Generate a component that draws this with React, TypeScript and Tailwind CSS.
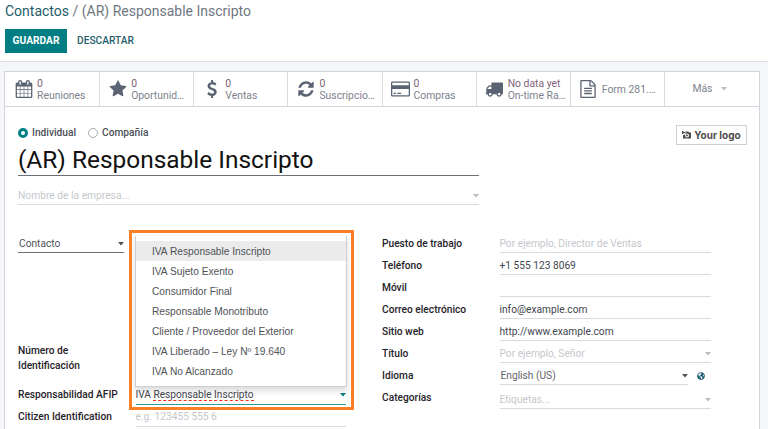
import React from "react";
import { FaGlobeAmericas } from "react-icons/fa";

const icons = {
  calendar:
    "M192 1664h288v-288h-288v288zm352 0h320v-288h-320v288zm-352-352h288v-320h-288v320zm352 0h320v-320h-320v320zm-352-384h288v-288h-288v288zm736 736h320v-288h-320v288zm-384-736h320v-288h-320v288zm768 736h288v-288h-288v288zm-384-352h320v-320h-320v320zm-352-864v-288q0-13-9.5-22.5t-22.5-9.5h-64q-13 0-22.5 9.5t-9.5 22.5v288q0 13 9.5 22.5t22.5 9.5h64q13 0 22.5-9.5t9.5-22.5zm736 864h288v-320h-288v320zm-384-384h320v-288h-320v288zm384 0h288v-288h-288v288zm32-480v-288q0-13-9.5-22.5t-22.5-9.5h-64q-13 0-22.5 9.5t-9.5 22.5v288q0 13 9.5 22.5t22.5 9.5h64q13 0 22.5-9.5t9.5-22.5zm384-64v1280q0 52-38 90t-90 38h-1408q-52 0-90-38t-38-90v-1280q0-52 38-90t90-38h128v-96q0-66 47-113t113-47h64q66 0 113 47t47 113v96h384v-96q0-66 47-113t113-47h64q66 0 113 47t47 113v96h128q52 0 90 38t38 90z",
  star: "M1728 647q0 22-26 48l-363 354 86 500q1 7 1 20 0 21-10.5 35.5t-30.5 14.5q-19 0-40-12l-449-236-449 236q-22 12-40 12-21 0-31.5-14.5t-10.5-35.5q0-6 2-20l86-500-364-354q-25-27-25-48 0-37 56-46l502-73 225-455q19-41 49-41t49 41l225 455 502 73q56 9 56 46z",
  dollar:
    "M1362 1185q0 153-99.5 263.5t-258.5 136.5v175q0 14-9 23t-23 9h-135q-13 0-22.5-9.5t-9.5-22.5v-175q-66-9-127.5-31t-101.5-44.5-74-48-46.5-37.5-17.5-18q-17-21-2-41l103-135q7-10 23-12 15-2 24 9l2 2q113 99 243 125 37 8 74 8 81 0 142.5-43t61.500-122q0-28-15-53t-33.500-42-58.500-37.500-66-32-80-32.500q-39-16-61.500-25t-61.500-26.500-62.500-31-56.500-35.500-53.500-42.500-43.500-49-35.500-58-21-66.500-8.500-78q0-138 98-242t255-134v-180q0-13 9.500-22.500t22.500-9.500h135q14 0 23 9t9 23v176q57 6 110.500 23t87 33.500 63.500 37.500 39 29 15 14q17 18 5 38l-81 146q-8 15-23 16-14 3-27-7-3-3-14.500-12t-39-26.500-58.500-32-74.500-26-85.500-11.500q-95 0-155 43t-60 111q0 26 8.500 48t29.500 41.500 39.500 33 56 31 60.500 27 70 27.500q53 20 81 31.500t76 35 75.500 42.500 62 50 53 63.500 31.500 76.500 13 94z",
  refresh:
    "M1639 1056q0 5-1 7-64 268-268 434.500t-478 166.500q-146 0-282.500-55t-243.500-157l-129 129q-19 19-45 19t-45-19-19-45v-448q0-26 19-45t45-19h448q26 0 45 19t19 45-19 45l-137 137q71 66 161 102t187 36q134 0 250-65t186-179q11-17 53-117 8-23 30-23h192q13 0 22.500 9.500t9.500 22.500zm25-800v448q0 26-19 45t-45 19h-448q-26 0-45-19t-19-45 19-45l138-138q-148-137-349-137-134 0-250 65t-186 179q-11 17-53 117-8 23-30 23h-199q-13 0-22.500-9.500t-9.500-22.500v-7q65-268 270-434.500t480-166.500q146 0 284 55.500t245 156.500l130-129q19-19 45-19t45 19 19 45z",
  card: "M1760 128q66 0 113 47t47 113v1216q0 66-47 113t-113 47h-1600q-66 0-113-47t-47-113v-1216q0-66 47-113t113-47h1600zm-1600 128q-13 0-22.500 9.500t-9.500 22.500v224h1664v-224q0-13-9.500-22.500t-22.500-9.500h-1600zm1600 1280q13 0 22.500-9.500t9.500-22.500v-608h-1664v608q0 13 9.500 22.500t22.500 9.500h1600zm-1504-128v-128h256v128h-256zm384 0v-128h384v128h-384z",
  truck:
    "M640 1408q0-52-38-90t-90-38-90 38-38 90 38 90 90 38 90-38 38-90zm-384-512h384v-256h-158q-13 0-22 9l-195 195q-9 9-9 22v30zm1280 512q0-52-38-90t-90-38-90 38-38 90 38 90 90 38 90-38 38-90zm256-1088v1024q0 15-4 26.500t-13.500 18.500-16.500 11.500-23.500 6-22.500 2-25.500 0-22.500-.5q0 106-75 181t-181 75-181-75-75-181h-384q0 106-75 181t-181 75-181-75-75-181h-64q-3 0-22.500.5t-25.500 0-22.500-2-23.500-6-16.500-11.500-13.500-18.500-4-26.500q0-26 19-45t45-19v-320q0-8-.5-35t0-38 2.500-34.500 6.500-37 14-30.500 22.500-30l198-198q19-19 50.500-32t58.500-13h160v-192q0-26 19-45t45-19h1024q26 0 45 19t19 45z",
  file: "M1596 380q28 28 48 76t20 88v1152q0 40-28 68t-68 28h-1344q-40 0-68-28t-28-68v-1600q0-40 28-68t68-28h896q40 0 88 20t76 48zm-444-244v376h376q-10-29-22-41l-313-313q-12-12-41-22zm384 1528v-1024h-416q-40 0-68-28t-28-68v-416h-768v1536h1280zm-1024-864q0-14 9-23t23-9h704q14 0 23 9t9 23v64q0 14-9 23t-23 9h-704q-14 0-23-9t-9-23v-64zm736 224q14 0 23 9t9 23v64q0 14-9 23t-23 9h-704q-14 0-23-9t-9-23v-64q0-14 9-23t23-9h704zm0 256q14 0 23 9t9 23v64q0 14-9 23t-23 9h-704q-14 0-23-9t-9-23v-64q0-14 9-23t23-9h704z",
};

type IconName = keyof typeof icons;

function Icon({ name, className }: { name: IconName; className: string }) {
  return (
    <svg viewBox={name === "card" ? "0 0 1920 1792" : "0 0 1792 1792"} className={className} fill="currentColor">
      <path d={icons[name]} />
    </svg>
  );
}

function Caret({ className = "text-[#b9bcc3]" }: { className?: string }) {
  return (
    <svg viewBox="0 0 6 4" className={`h-[4px] w-[6px] shrink-0 ${className}`} fill="currentColor">
      <path d="M0 0h6L3 3.500z" />
    </svg>
  );
}

const stats: { icon: IconName; size: string; value?: string; label: string }[] = [
  { icon: "calendar", size: "size-[18px]", value: "0", label: "Reuniones" },
  { icon: "star", size: "size-[18px]", value: "0", label: "Oportunid…" },
  { icon: "dollar", size: "size-[18px]", value: "0", label: "Ventas" },
  { icon: "refresh", size: "size-[18px]", value: "0", label: "Suscripcio…" },
  { icon: "card", size: "h-[18px] w-[19px]", value: "0", label: "Compras" },
  { icon: "truck", size: "size-[18px]", value: "No data yet", label: "On-time Ra…" },
  { icon: "file", size: "size-[18px]", label: "Form 281.…" },
];

const options = [
  "IVA Responsable Inscripto",
  "IVA Sujeto Exento",
  "Consumidor Final",
  "Responsable Monotributo",
  "Cliente / Proveedor del Exterior",
  "IVA Liberado – Ley Nº 19.640",
  "IVA No Alcanzado",
];

const contactRows: { label: string; value: string; muted?: boolean; kind?: "select" | "lang" | "tags" }[] = [
  { label: "Puesto de trabajo", value: "Por ejemplo, Director de Ventas", muted: true },
  { label: "Teléfono", value: "+1 555 123 8069" },
  { label: "Móvil", value: "" },
  { label: "Correo electrónico", value: "info@example.com" },
  { label: "Sitio web", value: "http://www.example.com" },
  { label: "Título", value: "Por ejemplo, Señor", muted: true, kind: "select" },
  { label: "Idioma", value: "English (US)", kind: "lang" },
  { label: "Categorías", value: "Etiquetas...", muted: true, kind: "tags" },
];

function Header() {
  return (
    <header className="h-[62px] border-b border-[#dcdee4] bg-white pl-[5px] pt-[3px]">
      <h1 className="h-[18px] whitespace-nowrap text-[14px] leading-[17px] text-[#6f7782]">
        <span className="text-[#1d5b68]">Contactos</span> / (AR) Responsable Inscripto
      </h1>
      <div className="mt-[8px] flex h-[24px] items-center text-[10.2px]">
        <button className="h-[24px] w-[62px] bg-[#017e84] font-bold leading-[24px] text-white">GUARDAR</button>
        <button className="ml-[10px] font-medium text-[#25606c]">DESCARTAR</button>
      </div>
    </header>
  );
}

function StatBar() {
  return (
    <div className="grid h-[35px] grid-cols-8 border-b border-[#d3d5dc] pl-px">
      {stats.map((s) => (
        <div key={s.label} className="flex min-w-0 items-center border-r border-[#d9dbe1] pl-[8.500px] text-[#5a6372]">
          <Icon name={s.icon} className={`shrink-0 ${s.size}`} />
          <div className={`whitespace-nowrap pt-px text-[10.4px] leading-[12px] text-[#7c828c] ${s.icon === "card" ? "ml-[3.500px]" : "ml-[4.500px]"}`}>
            {s.value && <div className="text-[#7f6379]">{s.value}</div>}
            <div>{s.label}</div>
          </div>
        </div>
      ))}
      <div className="flex items-center justify-center gap-[9px] pr-[4px] text-[10.4px] text-[#7c828c]">
        Más <Caret />
      </div>
    </div>
  );
}

function Identity() {
  return (
    <section className="flex h-[129px] items-start justify-between pl-[13px] pr-[12px] pt-[18px]">
      <div className="w-[461px]">
        <div className="flex h-[15px] items-center text-[10.2px] font-medium text-[#4b4f57]">
          <span className="size-[10px] rounded-full border-[3px] border-[#017e84] bg-white" />
          <span className="ml-[4px]">Individual</span>
          <span className="ml-[12px] size-[10px] rounded-full border border-[#a9acb3]" />
          <span className="ml-[4px]">Compañía</span>
        </div>
        <div className="mt-[5px] h-[31px] border-b border-[#6b6f78] text-[24.450px] leading-[29px] whitespace-nowrap text-[#111]">
          (AR) Responsable Inscripto
        </div>
        <div className="mt-[11px] flex h-[18px] items-center justify-between border-b border-[#d9dade] pt-px text-[10.250px] text-[#c5c7cc]">
          Nombre de la empresa...
          <Caret />
        </div>
      </div>
      <div className="flex h-[20px] w-[71px] items-center justify-center gap-[3px] border border-[#cfd0d3] text-[#4c4c4c]">
        <svg viewBox="0 0 18 16" className="h-[8px] w-[9px]" fill="currentColor">
          <path d="M0 0h3v2h3v2H3v2H0V4H-1V2H0zM7 1h6l1 2h4v12H2V8h3V6h2zM10 5a4 4 0 1 0 0 8 4 4 0 0 0 0-8zm0 2a2 2 0 1 1 0 4 2 2 0 0 1 0-4z" fillRule="evenodd" />
        </svg>
        <span className="font-['Inter'] text-[10px] font-bold whitespace-nowrap">Your logo</span>
      </div>
    </section>
  );
}

function Misspelled({ children }: { children: string }) {
  return <span className="inline-block border-b border-dashed border-[#ff2a20] leading-[10px]">{children}</span>;
}

function AddressColumn() {
  return (
    <div className="w-[364px] text-[10.200px]">
      <div className="flex h-[17px] w-[106px] items-center justify-between border-b border-[#6b6f78] pl-[1px] text-[#4f535b]">
        Contacto
        <Caret className="text-[#4f535b]" />
      </div>
      <div className="mt-[90px] h-[30px] font-medium leading-[15px] text-[#1f2229]">
        Número de
        <br />
        Identificación
      </div>
      <div className="mt-[13px] flex h-[19px]">
        <div className="w-[117.500px] font-medium leading-[17px] text-[#1f2229]">Responsabilidad AFIP</div>
        <div className="flex w-[210px] items-center justify-between border-b border-[#2f9a97] text-[10.150px] text-[#42464e]">
          <span>
            IVA <Misspelled>Responsable</Misspelled> <Misspelled>Inscripto</Misspelled>
          </span>
          <Caret className="text-[#017e84]" />
        </div>
      </div>
      <div className="mt-[3px] flex h-[19px]">
        <div className="w-[117.500px] font-medium leading-[17px] text-[#1f2229]">Citizen Identification</div>
        <div className="w-[210px] border-b border-[#d9dade] leading-[17px] text-[#c5c7cc]">e.g. 123455 555 6</div>
      </div>
    </div>
  );
}

function ContactColumn() {
  return (
    <div className="flex w-[330px] flex-col gap-[5px] text-[10.200px]">
      {contactRows.map((r) => (
        <div key={r.label} className="flex h-[17px] items-start">
          <div className="w-[117.500px] font-medium leading-[15px] text-[#1f2229]">{r.label}</div>
          <div
            className={`flex items-center justify-between whitespace-nowrap border-b border-[#d9dade] ${
              r.kind === "tags" ? "h-[19px] pt-[2px]" : "h-[17px]"
            } ${r.kind === "lang" ? "w-[188.500px] pl-[1px]" : "w-[211px]"} ${
              r.muted ? "text-[#c5c7cc]" : r.kind ? "text-[#5f636b]" : "text-[#42464e]"
            }`}
          >
            {r.value}
            {r.kind && <Caret className={r.kind === "lang" ? "text-[#4f535b]" : "text-[#b9bcc3]"} />}
          </div>
          {r.kind === "lang" && <FaGlobeAmericas className="mt-[4px] ml-[9px] size-[8px] text-[#1b5a75]" />}
        </div>
      ))}
    </div>
  );
}

function OptionsMenu() {
  return (
    <>
      <ul className="absolute left-[135px] top-[236px] h-[151px] w-[212px] border-x border-b border-[#cfcfcf] bg-white pt-[5px] font-['Liberation_Sans',Arial,sans-serif] text-[10.200px] text-[#4f5257] shadow-[0_4px_6px_rgba(0,0,0,0.14)]">
        {options.map((o, i) => (
          <li key={o} className={`h-[20px] pl-[16px] leading-[21px] ${i === 0 ? "bg-[#ebebeb]" : ""}`}>
            {o}
          </li>
        ))}
      </ul>
      <div className="absolute left-[129px] top-[230px] h-[180px] w-[225px] border-[3px] border-[#fb7f24]" />
    </>
  );
}

export default function App() {
  return (
    <div className="relative h-[429px] w-[768px] overflow-hidden bg-[#f4f6fa] font-['Roboto',sans-serif]">
      <Header />
      <main className="ml-[4px] mt-[9px] h-[370px] w-[756px] border border-[#d3d5dc] bg-white">
        <StatBar />
        <Identity />
        <div className="flex pl-[13px]">
          <AddressColumn />
          <ContactColumn />
        </div>
      </main>
      <OptionsMenu />
    </div>
  );
}
